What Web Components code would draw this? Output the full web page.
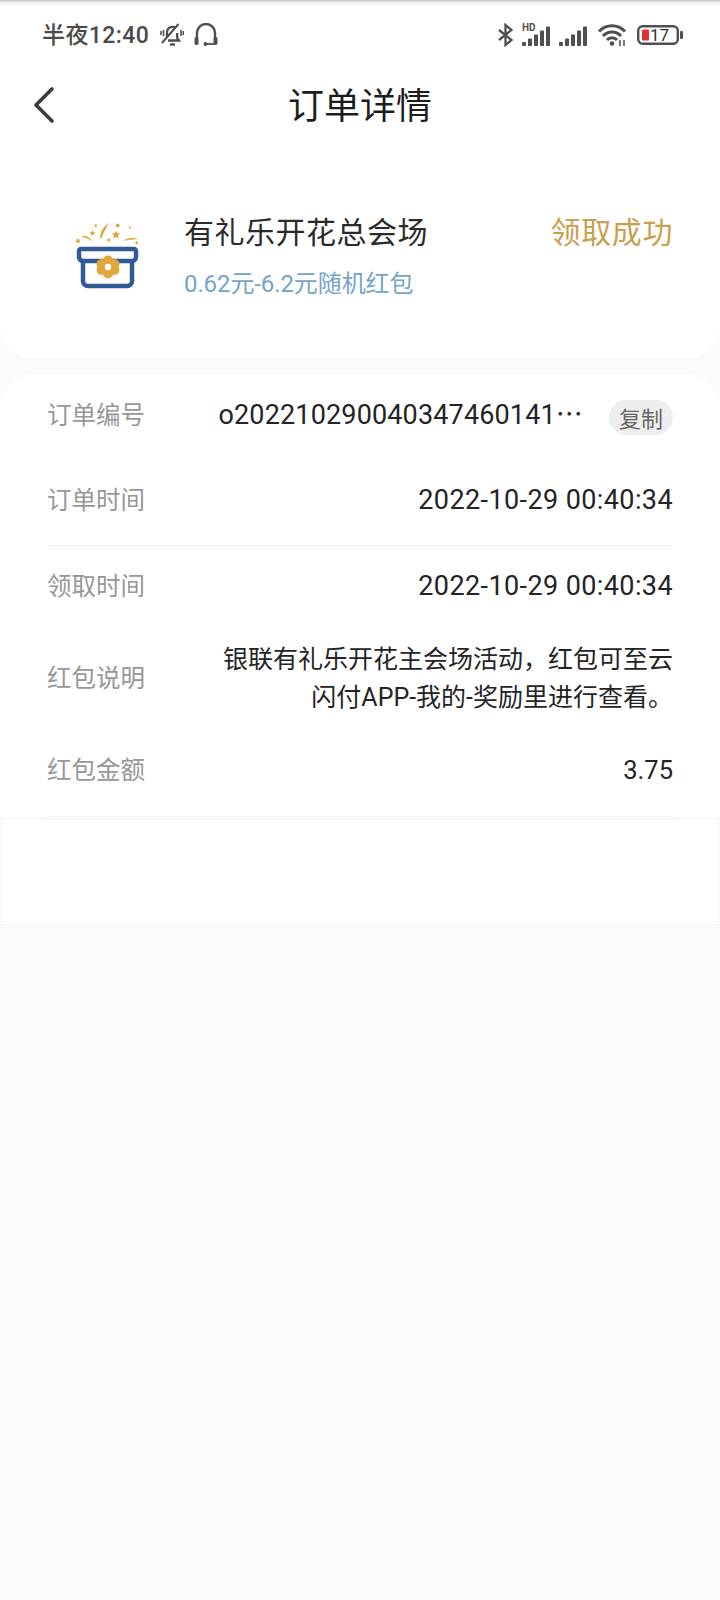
<!DOCTYPE html>
<html lang="zh"><head><meta charset="utf-8">
<style>
html,body{margin:0;padding:0;background:#fafafa}
body{width:720px;height:1600px;overflow:hidden;font-family:"Noto Sans CJK SC",Roboto,sans-serif}
</style></head><body>
<order-page></order-page>
<script>
const FONT='"Noto Sans CJK SC",Roboto,sans-serif';
const LATIN='Roboto,"Noto Sans CJK SC",sans-serif';
class StatusBar extends HTMLElement{constructor(){super();this.attachShadow({mode:'open'}).innerHTML=`
<style>:host{display:flex;align-items:center;justify-content:space-between;height:66px;padding:4px 37px 0 42px;box-sizing:border-box;color:#4a4a4a}
.l,.r{display:flex;align-items:center}
.t{font:500 23px/30px ${LATIN};letter-spacing:.4px;margin:2px 11px 0 0}
svg{display:block}.b{position:relative;width:46px;height:20px;margin-left:11px;display:flex;align-items:center}
.n{position:absolute;left:13px;top:0;font:400 17px/20px Roboto,sans-serif;color:#333}</style>
<div class="l"><span class="t">半夜12:40</span>
<svg width="24" height="24" viewBox="0 0 24 24" fill="none" stroke="#4f4f4f" stroke-width="2.300"><path d="M8 17.500h11l-1.800-2.600v-5"/><path d="M15.500 4.800A5.500 5.500 0 0 0 7 9.500v4.500"/><path d="M10 21.500h5" stroke-width="2.400"/><path d="M2 20 18.500 1" stroke-width="2"/><path d="M3.500 7v6M1 8v4M21 7v6M23.300 8v4" stroke-width="1.600"/></svg>
<svg style="margin-left:10px" width="24" height="24" viewBox="0 0 24 24" fill="none" stroke="#4f4f4f" stroke-width="2.400"><path d="M3 15V10a9 9 0 0 1 18 0v5"/><rect x="0.500" y="14" width="4" height="8" rx="1.700" fill="#4f4f4f" stroke="none"/><rect x="19.500" y="14" width="4" height="8" rx="1.700" fill="#4f4f4f" stroke="none"/><path d="M12 21h8" stroke-width="1.800"/><circle cx="11.500" cy="21" r="2" fill="#4f4f4f" stroke="none"/></svg></div>
<div class="r">
<svg width="15" height="24" viewBox="0 0 15 24" fill="none" stroke="#4f4f4f" stroke-width="2.300"><path d="M1 7 13.500 17 7.500 22V2l6 5L1 17"/></svg>
<svg style="margin-left:9px" width="28" height="24" viewBox="0 0 28 24" fill="#4f4f4f"><text x="0" y="8" font-family="Roboto,sans-serif" font-weight="700" font-size="10">HD</text><rect x="0" y="19" width="4" height="4" rx="1"/><rect x="6" y="15.500" width="4" height="7.500" rx=".8"/><rect x="12" y="11.500" width="4" height="11.500" rx=".8"/><rect x="18" y="7.500" width="4" height="15.500" rx=".8"/><rect x="24" y="3.500" width="4" height="19.500" rx=".8"/></svg>
<svg style="margin-left:9px" width="28" height="24" viewBox="0 0 28 24" fill="#4f4f4f"><rect x="0" y="19" width="4" height="4" rx="1"/><rect x="6" y="15.500" width="4" height="7.500" rx=".8"/><rect x="12" y="11.500" width="4" height="11.500" rx=".8"/><rect x="18" y="7.500" width="4" height="15.500" rx=".8"/><rect x="24" y="3.500" width="4" height="19.500" rx=".8"/></svg>
<svg style="margin-left:11px" width="28" height="24" viewBox="0 0 28 24" fill="none" stroke="#4f4f4f" stroke-width="3"><path d="M1 8.500a17.500 17.500 0 0 1 26 0"/><path d="M5 13a12 12 0 0 1 18 0"/><path d="M9 17a6.500 6.500 0 0 1 10 0"/><circle cx="14" cy="20.500" r="2.300" fill="#4f4f4f" stroke="none"/><path d="M22 17v6M26 17v6" stroke-width="1.500"/></svg>
<span class="b"><svg width="46" height="20" viewBox="0 0 46 20" fill="none"><rect x="1.200" y="1.200" width="39.600" height="17.600" rx="4.500" stroke="#4f4f4f" stroke-width="2.400"/><rect x="5" y="4.500" width="7" height="11" rx="1" fill="#e5312f"/><rect x="43" y="6" width="3" height="8" rx="1" fill="#4f4f4f"/></svg><span class="n">17</span></span>
</div>`}}
class NavBar extends HTMLElement{constructor(){super();this.attachShadow({mode:'open'}).innerHTML=`
<style>:host{display:flex;align-items:center;justify-content:center;position:relative;box-sizing:border-box;height:78px;padding-bottom:4px;font:400 36px/50px ${FONT};color:#1c1c1c}
svg{position:absolute;left:32px;top:19px}</style>
<svg width="26" height="40" viewBox="0 0 26 40" fill="none" stroke="#3c3c3c" stroke-width="3.600" stroke-linecap="round" stroke-linejoin="round"><path d="M20 4 4 20l16 16"/></svg><slot></slot>`}}
class GiftIcon extends HTMLElement{constructor(){super();this.attachShadow({mode:'open'}).innerHTML=`
<style>:host{display:block;width:70px;height:70px}svg{display:block;overflow:visible}</style>
<svg width="70" height="70" viewBox="0 0 70 70" fill="none">
<g fill="#e0a83c" transform="translate(0 -2)"><circle cx="3" cy="18" r="1.900"/><circle cx="20.700" cy="2.500" r="1.300"/><circle cx="42.700" cy="2.500" r="1.900"/><circle cx="55" cy="4.500" r="1.100"/><circle cx="33.700" cy="17" r="1.500"/><circle cx="61.700" cy="20" r="1.400"/>
<path d="M17.500 7l.9 1.900 2 .3-1.500 1.400.4 2-1.800-1-1.800 1 .4-2-1.500-1.400 2-.3z"/><path d="M41 7.500l1.200 2.800 3 .3-2.300 2 .7 3-2.600-1.500-2.600 1.500.7-3-2.300-2 3-.3z"/>
<path d="M6 13.500c4.500-1.500 9.500.5 11.500 5-3.500-2.500-7-4-11.500-5zM63.500 16c-5-1.500-11.500-1.500-15 1.800 5-.8 10-1.500 15-1.800zM25 15c0-5.500 3-11.500 9-15-2.500 4-5.500 9.500-7.500 15z"/></g>
<path d="M6 24h53a2 2 0 0 1 2 2v6a4 4 0 0 1-4 4H8a4 4 0 0 1-4-4v-6a2 2 0 0 1 2-2z" stroke="#2f5a96" stroke-width="4.500" stroke-linejoin="round"/>
<path d="M8 36v20a5 5 0 0 0 5 5h39a5 5 0 0 0 5-5V36" stroke="#2f5a96" stroke-width="4.500"/>
<g fill="#e0a83c"><circle cx="33" cy="35.500" r="5"/><circle cx="33" cy="48.500" r="5"/><circle cx="26.500" cy="39" r="5"/><circle cx="39.500" cy="39" r="5"/><circle cx="26.500" cy="45" r="5"/><circle cx="39.500" cy="45" r="5"/><circle cx="33" cy="42" r="7"/></g><circle cx="33" cy="42" r="3.200" fill="#fff"/></svg>`}}
class RewardCard extends HTMLElement{constructor(){super();this.attachShadow({mode:'open'}).innerHTML=`
<style>:host{display:flex;box-sizing:border-box;height:214px;padding:64px 47px 0 75px;font-family:${FONT}}
.i{margin-top:17px;margin-right:39px}.m{flex:1}.a{font:400 30px/44px ${FONT};color:#2a2a2a;letter-spacing:.5px}.b{font:400 24px/34px ${LATIN};color:#76a3c9;margin-top:15px;letter-spacing:-.1px}
.s{font:400 30px/44px ${FONT};color:#c8a04e;letter-spacing:.6px}</style>
<gift-icon class="i"></gift-icon><div class="m"><div class="a">有礼乐开花总会场</div><div class="b">0.62元-6.2元随机红包</div></div><div class="s">领取成功</div>`}}
class InfoRow extends HTMLElement{constructor(){super();this.attachShadow({mode:'open'}).innerHTML=`
<style>:host{display:flex;align-items:center;justify-content:space-between;box-sizing:border-box;height:var(--h,84px)}
.l{flex:none;width:150px;margin-bottom:3px;font:400 24.500px/34px ${FONT};color:#979797}
.v{flex:1;display:flex;justify-content:flex-end;align-items:center;text-align:right;font:400 27px/38px ${LATIN};color:#242424}</style>
<div class="l"></div><div class="v"><slot></slot></div>`}
connectedCallback(){this.shadowRoot.querySelector('.l').textContent=this.getAttribute('label')}}
class CopyPill extends HTMLElement{constructor(){super();this.attachShadow({mode:'open'}).innerHTML=`
<style>:host{display:inline-block;width:64px;height:35px;margin:5px 0 0 26px;border-radius:18px;background:#eee;color:#666;font:400 22px/35px ${FONT};text-align:center}</style><slot></slot>`}}
class InfoCard extends HTMLElement{constructor(){super();this.attachShadow({mode:'open'}).innerHTML=`
<style>:host{display:block;box-sizing:border-box;margin-top:17px;height:443px;padding:0 47px;background:#fff;border-radius:32px 32px 0 0}
::slotted(hr){margin:0;border:0;border-top:1px solid #f3f3f3}</style><slot></slot>`}}
class OrderPage extends HTMLElement{constructor(){super();this.attachShadow({mode:'open'}).innerHTML=`
<style>:host{display:block;width:720px;height:1600px;background:#fafafa;color:#222}
.top{background:#fff;border-radius:0 0 32px 32px;position:relative;height:358px}
.sh{position:absolute;left:0;right:0;top:0;height:6px;background:linear-gradient(#bbb,#eee 40%,#fff)}
.box{box-sizing:border-box;height:107px;background:#fff;border:1px solid #f4f4f4}
.num{white-space:nowrap;letter-spacing:.15px}
.date{letter-spacing:.4px}
.desc{display:block;width:452px;font-size:25px}
.amt{font-size:25.500px}
</style>
<div class="top"><status-bar></status-bar><nav-bar>订单详情</nav-bar><reward-card></reward-card><div class="sh"></div></div>
<info-card>
<info-row label="订单编号" style="--h:80px"><span class="num">o202210290040347460141⋯</span><copy-pill>复制</copy-pill></info-row>
<info-row label="订单时间" style="--h:90px"><span class="date">2022-10-29 00:40:34</span></info-row><hr>
<info-row label="领取时间" style="--h:80px"><span class="date">2022-10-29 00:40:34</span></info-row>
<info-row label="红包说明" style="--h:105px"><span class="desc">银联有礼乐开花主会场活动，红包可至云闪付APP-我的-奖励里进行查看。</span></info-row>
<info-row label="红包金额" style="--h:78px"><span class="amt">3.75</span></info-row><hr style="margin-top:7px">
</info-card>
<div class="box"></div>`}}
for(const [n,c] of Object.entries({'status-bar':StatusBar,'nav-bar':NavBar,'gift-icon':GiftIcon,'reward-card':RewardCard,'info-row':InfoRow,'copy-pill':CopyPill,'info-card':InfoCard,'order-page':OrderPage}))customElements.define(n,c);
</script></body></html>
